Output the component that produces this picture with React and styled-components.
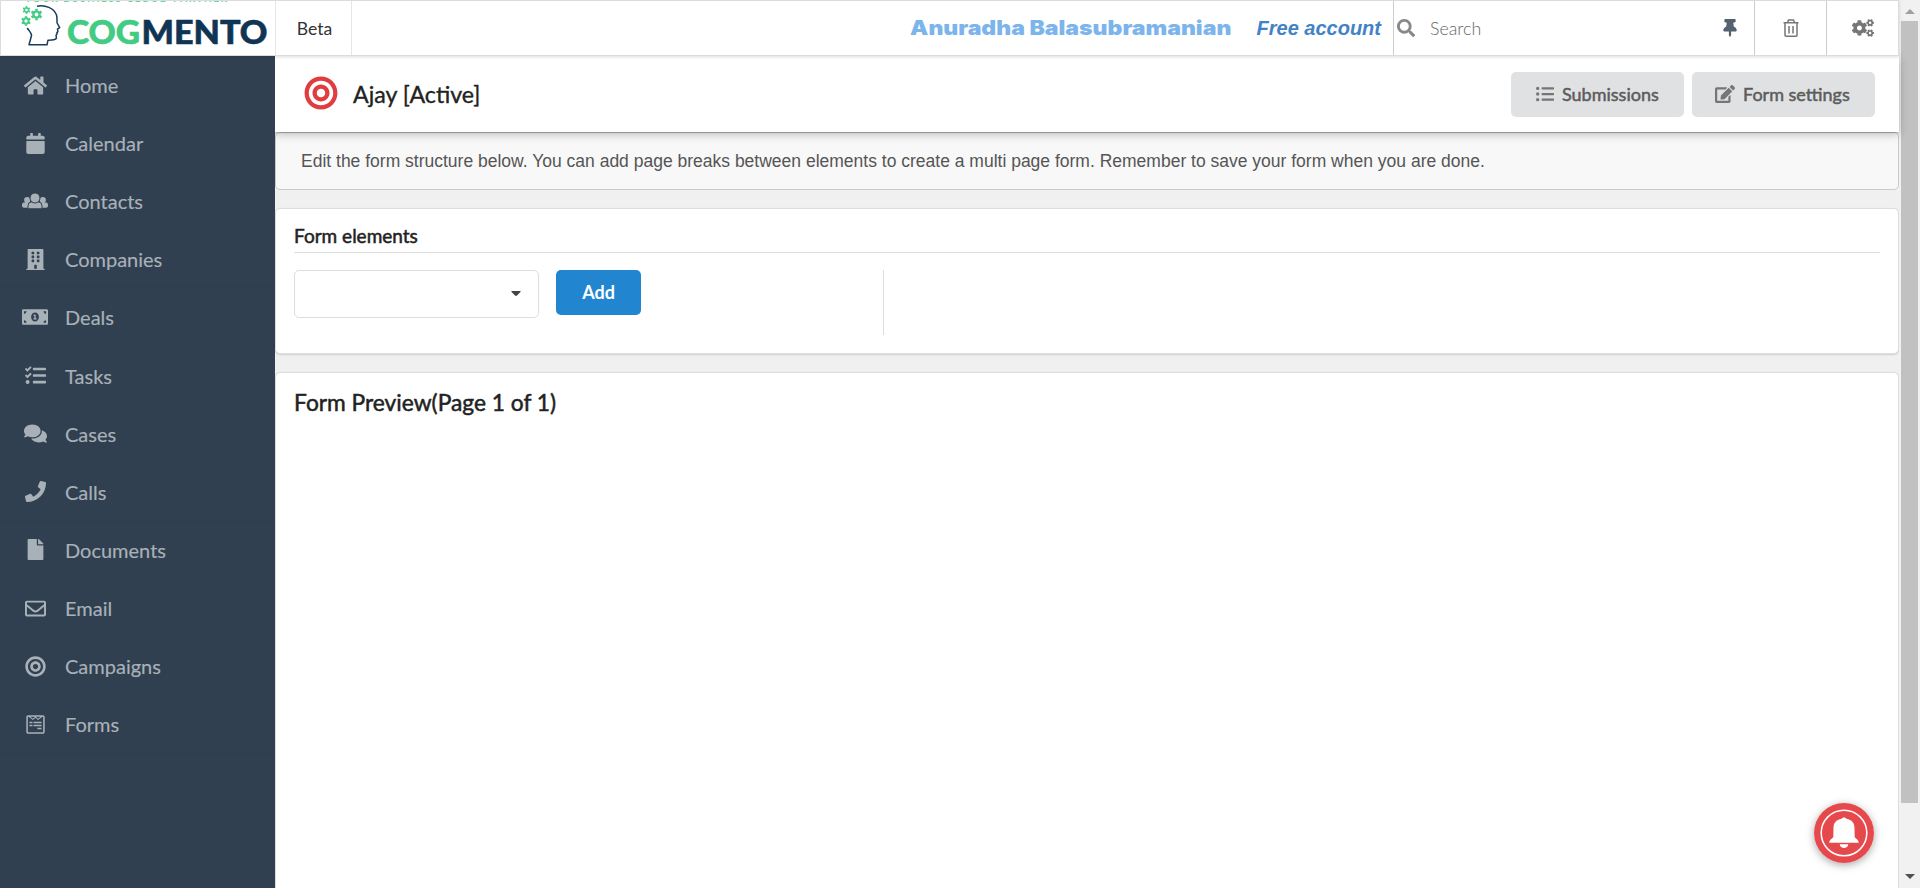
import React from "react";
import styled, { createGlobalStyle } from "styled-components";
import {
  FaHome, FaCalendar, FaBuilding, FaMoneyBillAlt, FaTasks, FaComments, FaPhone,
  FaFile, FaRegEnvelope, FaBullseye, FaWpforms, FaSearch, FaThumbtack, FaCogs, FaListUl, FaEdit,
} from "react-icons/fa";

const Global = createGlobalStyle`
  * { box-sizing: border-box; }
  body { margin: 0; overflow: hidden; background: #f0f0f0; font-family: Lato, "Liberation Sans", sans-serif; }
`;
const Screen = styled.div`display: flex; width: 1920px; height: 888px; overflow: hidden;`;
const Page = styled.div`display: flex; flex-direction: column; width: 1899px; height: 888px;`;
const TopBar = styled.header`
  display: flex; flex: none; height: 56px; background: #fff; border: 1px solid #dcdcdc;
  position: relative; z-index: 4; box-shadow: 0 1px 3px rgba(34, 36, 38, 0.15);
`;
const LogoCell = styled.div`width: 275px; height: 54px; overflow: hidden; border-right: 1px solid #e6e6e6;`;
const BetaCell = styled.div`
  width: 76px; display: flex; align-items: center; justify-content: center; padding-left: 2px;
  border-right: 1px solid #e6e6e6; font-size: 17.6px; color: #333;
`;
const Account = styled.div`
  flex: 1; display: flex; align-items: center; justify-content: flex-end; padding-right: 12px; gap: 25px;
`;
const UserName = styled.span`
  font: 900 20px Inter, sans-serif; color: #7cb4ec; white-space: nowrap;
  transform: scaleX(1.15); transform-origin: right center;
`;
const Plan = styled.span`font: italic bold 20px "Liberation Sans", sans-serif; color: #4183c4; white-space: nowrap;`;
const SearchCell = styled.div`
  width: 361px; display: flex; align-items: center; border-left: 1px solid #ccc; padding: 0 15px 0 3px;
  color: #888;
`;
const SearchText = styled.span`margin-left: 15px; font-size: 17.8px; font-weight: 300; color: #666; flex: 1;`;
const IconCell = styled.div`
  width: ${(p) => p.$w}px; display: flex; align-items: center; justify-content: center;
  border-left: 1px solid #ccc; color: #767676;
`;
const Body = styled.div`display: flex; flex: 1; min-height: 0;`;
const Sidebar = styled.nav`width: 275px; flex: none; background: #304050; position: relative; z-index: 3;`;
const NavItem = styled.a`
  display: flex; align-items: center; height: 58.12px; padding: 1px 0 0 22px;
  border-bottom: 1px solid #2e3e4d; color: #a9b1b8; font-size: 20px; -webkit-text-stroke: 0.15px #a9b1b8;
`;
const NavIcon = styled.span`width: 26px; margin-right: 17px; display: flex; justify-content: center; svg { flex: none; }`;
const Main = styled.main`flex: 1; min-width: 0; display: flex; flex-direction: column;`;
const TitleBar = styled.div`
  display: flex; align-items: center; flex: none; height: 76px; background: #fff; padding: 0 24px 0 29px;
  position: relative; z-index: 2; box-shadow: 0 1px 1px rgba(0, 0, 0, 0.12), 0 2px 9px rgba(0, 0, 0, 0.25);
`;
const TitleIcon = styled(FaBullseye)`margin-bottom: 2px; color: #e03e3e;`;
const Title = styled.h1`
  margin: 0 auto 0 15px; font-size: 23.2px; font-weight: 400; color: #222; -webkit-text-stroke: 0.35px #222;
`;
const GreyButton = styled.button`
  display: flex; align-items: center; height: 45px; width: ${(p) => p.$w}px; margin-left: 8px;
  padding: 0 0 0 ${(p) => p.$pad}px;
  border: 0; border-radius: 5px; background: #e0e1e2; color: #5c5c5c; gap: 8px;
  font: 400 18px Lato, sans-serif; -webkit-text-stroke: 0.5px #5c5c5c; white-space: nowrap;
  svg { color: #767676; }
`;
const Message = styled.div`
  flex: none; height: 58px; margin-bottom: 18px; padding: 0 25px; display: flex; align-items: center;
  background: #f8f8f8; border: 1px solid #c9caca; border-radius: 5px;
  font: 17.5px "Liberation Sans", sans-serif; color: #555; white-space: nowrap;
`;
const Card = styled.section`
  flex: none; height: ${(p) => p.$h}px; margin-bottom: 18px; padding: 0 18px; background: #fff;
  border: 1px solid #dcdddd; border-radius: 5px; box-shadow: 0 1px 2px rgba(34, 36, 38, 0.15);
`;
const CardTitle = styled.h2`
  margin: 0; height: 44px; padding-top: 15px; border-bottom: 1px solid #dcdddd;
  font-size: 19px; line-height: 24px; font-weight: 400; color: #222; -webkit-text-stroke: 0.5px #222;
`;
const Controls = styled.div`display: flex; align-items: flex-start; padding-top: 17px;`;
const Dropdown = styled.div`
  width: 245px; height: 48px; border: 1px solid #dededf; border-radius: 5px; display: flex; align-items: center;
  justify-content: flex-end; padding: 0 17px 1px 0;
`;
const AddButton = styled.button`
  width: 85px; height: 45px; margin-left: 17px; padding: 0 0 2px; border: 0; border-radius: 5px;
  background: #2185d0; color: #fff; font: 700 18px Lato, sans-serif;
`;
const Divider = styled.div`width: 1px; height: 65px; margin-left: 242px; background: #dcdddd;`;
const PreviewTitle = styled.h3`
  margin: 16px 0 0; font-size: 22.75px; line-height: 28px; font-weight: 400; color: #222; -webkit-text-stroke: 0.5px #222;
`;
const ScrollTrack = styled.div`
  width: 21px; display: flex; flex-direction: column; align-items: center; background: #f1f1f1; padding: 9px 0;
`;
const ScrollThumb = styled.div`width: 17px; height: 782px; margin: 7px 0 auto; background: #c1c1c1;`;
const Bell = styled.div`
  position: fixed; left: 1814px; top: 803px; width: 60px; height: 60px; border-radius: 50%;
  box-shadow: 0 2px 9px rgba(0, 0, 0, 0.35);
`;

const Gear = ({ x, y, r }) => (
  <g transform={`translate(${x} ${y})`} stroke="#42cb83" fill="none">
    <circle r={r * 0.6} strokeWidth={r * 0.45} />
    {[0, 60, 120, 180, 240, 300].map((a) => (
      <line key={a} y1={-r * 0.75} y2={-r * 1.1} strokeWidth={r * 0.5} transform={`rotate(${a})`} />
    ))}
  </g>
);
const Logo = () => (
  <svg width="274" height="54" viewBox="1 1 274 54">
    <text x="25" y="1.9" fontFamily="Lato" fontSize="10" fontWeight="700" textLength="202" fill="#42cb83" opacity=".8">YOUR BUSINESS CLOUD PARTNER</text>
    <path d="M37 6.2C45 4.5 54 8 56.5 15c1 3 .2 6 .6 8l2.6 4.6-2.2 1.6.4 2.4-1 1 .2 1.3-1 1.4.3 2.7c-.6 2.5-4.5 1.5-8.4 2.2L47 44.8H29l2.6-9.5c-.4-3-2.5-4.3-4.4-7.3" fill="none" stroke="#173c5c" strokeWidth="1.5" strokeLinejoin="round" />
    <Gear x={26.5} y={10} r={3.5} />
    <Gear x={36.5} y={14.5} r={5.2} />
    <Gear x={26} y={21} r={4.4} />
    <text x="67" y="44" fontFamily="Lato" fontWeight="900" fontSize="33" textLength="73" lengthAdjust="spacingAndGlyphs" fill="#42cb83" stroke="#42cb83" strokeWidth=".6">COG</text>
    <text x="141.5" y="44" fontFamily="Lato" fontWeight="900" fontSize="33" textLength="126" lengthAdjust="spacingAndGlyphs" fill="#103554" stroke="#103554" strokeWidth=".6">MENTO</text>
  </svg>
);
const PeopleIcon = () => (
  <svg width="26" height="16" viewBox="0 0 26 16" fill="currentColor">
    <circle cx="5.2" cy="7" r="3.1" />
    <circle cx="20.8" cy="7" r="3.1" />
    <rect x="0" y="9.5" width="10" height="5.3" rx="2" />
    <rect x="16" y="9.5" width="10" height="5.3" rx="2" />
    <g stroke="#304050" strokeWidth="1">
      <path d="M6 15.8v-3q0-3.9 3.500-3.900h7q3.500 0 3.500 3.900v3z" />
      <circle cx="13" cy="5" r="5" />
    </g>
  </svg>
);
const TrashIcon = () => (
  <svg width="16" height="18" viewBox="0 0 16 18" fill="none" stroke="currentColor" strokeWidth="1.5">
    <path d="M.5 3.75h15M4.5 3.5L5.5 1h5l1 2.5M2 4v12.200q0 1 1 1h10q1 0 1-1V4M6 7v7.500M10 7v7.500" />
  </svg>
);
const CaretIcon = () => (
  <svg width="10" height="5">
    <path d="M.5 0h9q.2.8-.3 1.3L6 4.600q-1 .8-2 0L.8 1.300Q.3.8.5 0z" fill="#444" />
  </svg>
);
const BellIcon = () => (
  <svg width="60" height="60" viewBox="0 0 60 60">
    <circle cx="30" cy="30" r="30" fill="#e6494c" />
    <circle cx="30" cy="30" r="22.8" fill="none" stroke="#fff" strokeWidth="1.5" />
    <path d="M30 14.5c1.3 0 2 .6 2.4 1.300 5.500 1 8.300 4.200 8.100 9.700l.2 8.500c.8 1.700 4 2.600 4.100 5.800H15.200c.1-3.200 3.300-4.100 4.100-5.800l.2-8.500c-.2-5.500 2.600-8.700 8.100-9.700.4-.7 1.100-1.300 2.400-1.300zM25.700 41.200h8.600c-.4 5-8.200 5-8.600 0z" fill="#fff" />
  </svg>
);

const nav = [
  ["Home", FaHome, 23], ["Calendar", FaCalendar, 21], ["Contacts", PeopleIcon, 26], ["Companies", FaBuilding, 21],
  ["Deals", FaMoneyBillAlt, 26], ["Tasks", FaTasks, 21], ["Cases", FaComments, 23], ["Calls", FaPhone, 21],
  ["Documents", FaFile, 21], ["Email", FaRegEnvelope, 21], ["Campaigns", FaBullseye, 21], ["Forms", FaWpforms, 21],
];

export default function App() {
  return (
    <>
      <Global />
      <Screen>
        <Page>
          <TopBar>
            <LogoCell><Logo /></LogoCell>
            <BetaCell>Beta</BetaCell>
            <Account><UserName>Anuradha Balasubramanian</UserName><Plan>Free account</Plan></Account>
            <SearchCell><FaSearch size={18} /><SearchText>Search</SearchText><FaThumbtack size={18} color="#54616e" /></SearchCell>
            <IconCell $w={72}><TrashIcon /></IconCell>
            <IconCell $w={72}><FaCogs size={22} /></IconCell>
          </TopBar>
          <Body>
            <Sidebar>
              {nav.map(([label, Icon, size]) => (
                <NavItem key={label}><NavIcon><Icon size={size} /></NavIcon>{label}</NavItem>
              ))}
            </Sidebar>
            <Main>
              <TitleBar>
                <TitleIcon size={34} />
                <Title>Ajay [Active]</Title>
                <GreyButton $w={173} $pad={25}><FaListUl size={18} />Submissions</GreyButton>
                <GreyButton $w={183} $pad={23}><FaEdit size={20} />Form settings</GreyButton>
              </TitleBar>
              <Message>Edit the form structure below. You can add page breaks between elements to create a multi page form. Remember to save your form when you are done.</Message>
              <Card $h={146}>
                <CardTitle>Form elements</CardTitle>
                <Controls>
                  <Dropdown><CaretIcon /></Dropdown>
                  <AddButton>Add</AddButton>
                  <Divider />
                </Controls>
              </Card>
              <Card $h={560}><PreviewTitle>Form Preview(Page 1 of 1)</PreviewTitle></Card>
            </Main>
          </Body>
        </Page>
        <ScrollTrack>
          <svg width="10" height="5"><path d="M0 5L5 0l5 5z" fill="#a0a0a0" /></svg>
          <ScrollThumb />
          <svg width="10" height="5"><path d="M0 0L5 5l5-5z" fill="#505050" /></svg>
        </ScrollTrack>
      </Screen>
      <Bell><BellIcon /></Bell>
    </>
  );
}
